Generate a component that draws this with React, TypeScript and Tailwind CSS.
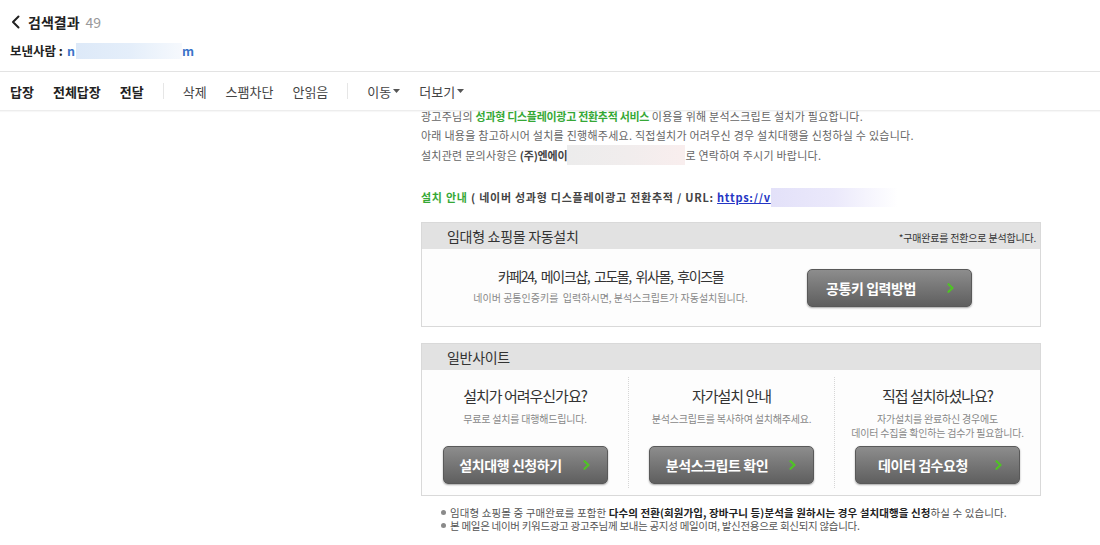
import React from "react";

const FONT = '"Noto Sans CJK KR", "Noto Sans", sans-serif';

function Chevron() {
  return (
    <svg width="8" height="10" viewBox="0 0 8 10" className="shrink-0">
      <path d="M1.5 1.2 L5.5 5 L1.5 8.8" fill="none" stroke="#4fc424" strokeWidth="2.2" strokeLinecap="round" strokeLinejoin="round" />
    </svg>
  );
}

function GrayButton({ label, shift }: { label: string; shift?: boolean }) {
  return (
    <div className="w-[165px] h-[38px] rounded-[5px] border border-[#595959] bg-gradient-to-b from-[#8d8d8d] to-[#5f5f5f] shadow-[0_1px_2px_rgba(0,0,0,0.35)] flex items-center pl-[3px] pr-[16px]">
      <span
        className={
          "flex-1 text-center text-white font-bold text-[14px] tracking-[-0.4px] leading-none " +
          (shift ? "mr-[16px]" : "mr-[8px]")
        }
      >
        {label}
      </span>
      <Chevron />
    </div>
  );
}

function Caret() {
  return (
    <svg width="7" height="4" viewBox="0 0 7 4" className="ml-[2px]">
      <path d="M0 0 L7 0 L3.5 4 Z" fill="#555" />
    </svg>
  );
}

export default function App() {
  return (
    <div className="w-[1100px] h-[545px] overflow-hidden bg-white text-[#333]" style={{ fontFamily: FONT }}>
      {/* Header */}
      <div className="relative z-10 bg-white h-[72px] px-[10px] pt-[11px] border-b border-[#e3e3e3]">
        <div className="flex items-center h-[22px]">
          <svg width="10" height="14" viewBox="0 0 10 14" className="ml-[1px] mr-[7px]">
            <path d="M7.5 1.5 L2 7 L7.5 12.5" fill="none" stroke="#222" strokeWidth="2" strokeLinecap="round" strokeLinejoin="round" />
          </svg>
          <span className="text-[14px] font-bold text-[#222] leading-none">검색결과</span>
          <span className="text-[14px] text-[#999] ml-[6px] leading-none">49</span>
        </div>
        <div className="flex items-center h-[20px] mt-[8px]">
          <span className="text-[12.5px] font-bold text-[#222] leading-none">보낸사람 :</span>
          <span className="text-[12.5px] font-bold text-[#3a74c8] ml-[4px] leading-none">n</span>
          <span className="w-[106px] h-[16px] ml-[1px] bg-gradient-to-r from-[#dde9f8] via-[#e4eefa] to-[#f6f9fd]" />
          <span className="text-[12.5px] font-bold text-[#3a74c8] leading-none">m</span>
        </div>
      </div>

      {/* Toolbar */}
      <div className="relative z-10 bg-white h-[39px] flex items-center px-[10px] gap-[19px] border-b border-[#ededed] shadow-[0_1px_1px_rgba(0,0,0,0.03)] text-[13px] leading-none">
        <span className="font-bold text-[#222]">답장</span>
        <span className="font-bold text-[#222]">전체답장</span>
        <span className="font-bold text-[#222]">전달</span>
        <span className="w-px h-[16px] bg-[#e6e6e6]" />
        <span className="text-[#444]">삭제</span>
        <span className="text-[#444]">스팸차단</span>
        <span className="text-[#444]">안읽음</span>
        <span className="w-px h-[16px] bg-[#e6e6e6]" />
        <span className="text-[#444] flex items-center">이동<Caret /></span>
        <span className="text-[#444] flex items-center">더보기<Caret /></span>
      </div>

      {/* Content */}
      <div className="pl-[421px] -mt-[4px]">
        <div className="text-[11px] leading-[19px] text-[#666] tracking-[0.25px]">
          <div className="whitespace-nowrap">
            광고주님의 <b className="text-[#36a836] tracking-[-0.3px]">성과형 디스플레이광고 전환추적 서비스</b> 이용을 위해 분석스크립트 설치가 필요합니다.
          </div>
          <div className="whitespace-nowrap">아래 내용을 참고하시어 설치를 진행해주세요. 직접설치가 어려우신 경우 설치대행을 신청하실 수 있습니다.</div>
          <div className="flex items-center whitespace-nowrap">
            <span>설치관련 문의사항은&nbsp;</span>
            <b className="text-[#444] tracking-[-0.2px]">(주)엔에이</b>
            <span className="w-[118px] h-[20px] bg-gradient-to-r from-[#ececec] via-[#f1eded] to-[#f9eeee]" />
            <span>로 연락하여 주시기 바랍니다.</span>
          </div>
          <div className="mt-[23px] flex items-center font-bold tracking-[0.75px] whitespace-nowrap">
            <span className="text-[#36a836]">설치 안내</span>
            <span className="text-[#444]">&nbsp;( 네이버 성과형 디스플레이광고 전환추적 / URL:&nbsp;</span>
            <span className="text-[#2436c4] underline">https://v</span>
            <span className="w-[127px] h-[19px] bg-gradient-to-r from-[#e3e1f9] via-[#ebe9fb] to-[#ffffff]" />
          </div>
        </div>

        {/* Section 1 */}
        <div className="mt-[15px] w-[620px] border border-[#d9d9d9]">
          <div className="h-[26px] bg-[#e2e2e2] flex items-center justify-between pl-[25px] pr-[4px]">
            <span className="text-[14px] text-[#333] leading-none tracking-[-0.3px]">임대형 쇼핑몰 자동설치</span>
            <span className="text-[10px] text-[#333] tracking-[-0.2px] leading-none mt-[3px]">*구매완료를 전환으로 분석합니다.</span>
          </div>
          <div className="h-[77px] bg-[#fdfdfd] flex items-center">
            <div className="w-[377px] text-center pb-[5px]">
              <div className="text-[14px] leading-[20px] text-[#333] tracking-[-1.4px] [word-spacing:3px]">카페24, 메이크샵, 고도몰, 위사몰, 후이즈몰</div>
              <div className="mt-[5px] text-[10px] leading-[14px] text-[#888] tracking-[0px]">네이버 공통인증키를&nbsp; 입력하시면, 분석스크립트가 자동설치됩니다.</div>
            </div>
            <div className="ml-[8px]">
              <GrayButton label="공통키 입력방법" shift />
            </div>
          </div>
        </div>

        {/* Section 2 */}
        <div className="mt-[16px] w-[620px] border border-[#d9d9d9]">
          <div className="h-[26px] bg-[#e2e2e2] flex items-center pl-[25px]">
            <span className="text-[14px] text-[#333] leading-none tracking-[-0.3px]">일반사이트</span>
          </div>
          <div className="bg-[#fdfdfd] py-[7px] grid grid-cols-3">
            {[
              { t: "설치가 어려우신가요?", s: ["무료로 설치를 대행해드립니다."], b: "설치대행 신청하기" },
              { t: "자가설치 안내", s: ["분석스크립트를 복사하여 설치해주세요."], b: "분석스크립트 확인" },
              { t: "직접 설치하셨나요?", s: ["자가설치를 완료하신 경우에도", "데이터 수집을 확인하는 검수가 필요합니다."], b: "데이터 검수요청" },
            ].map((c, i) => (
              <div
                key={i}
                className={
                  "flex flex-col items-center pt-[9px] pb-[4px] " +
                  (i > 0 ? "border-l border-dotted border-[#d6d6d6]" : "")
                }
              >
                <div className="text-[15px] leading-[20px] text-[#333] tracking-[-1px]">{c.t}</div>
                <div className="mt-[6px] h-[28px] text-center text-[10px] leading-[14px] text-[#888] tracking-[-0.2px]">
                  {c.s.map((l, j) => (
                    <div key={j}>{l}</div>
                  ))}
                </div>
                <div className="mt-[6px]">
                  <GrayButton label={c.b} />
                </div>
              </div>
            ))}
          </div>
        </div>

        {/* Notes */}
        <div className="mt-[10px] pl-[20px] text-[10.5px] leading-[13px] text-[#555] whitespace-nowrap">
          <div className="flex items-center tracking-[0.1px]">
            <span className="w-[5px] h-[5px] rounded-full bg-[#8a8a8a] mr-[4px]" />
            <span>
              임대형 쇼핑몰 중 구매완료를 포함한 <b className="text-[#222]">다수의 전환(회원가입, 장바구니 등)분석을 원하시는 경우 설치대행을 신청</b>하실 수 있습니다.
            </span>
          </div>
          <div className="flex items-center tracking-[-0.3px]">
            <span className="w-[5px] h-[5px] rounded-full bg-[#8a8a8a] mr-[4px]" />
            <span>본 메일은 네이버 키워드광고 광고주님께 보내는 공지성 메일이며, 발신전용으로 회신되지 않습니다.</span>
          </div>
        </div>
      </div>
    </div>
  );
}
